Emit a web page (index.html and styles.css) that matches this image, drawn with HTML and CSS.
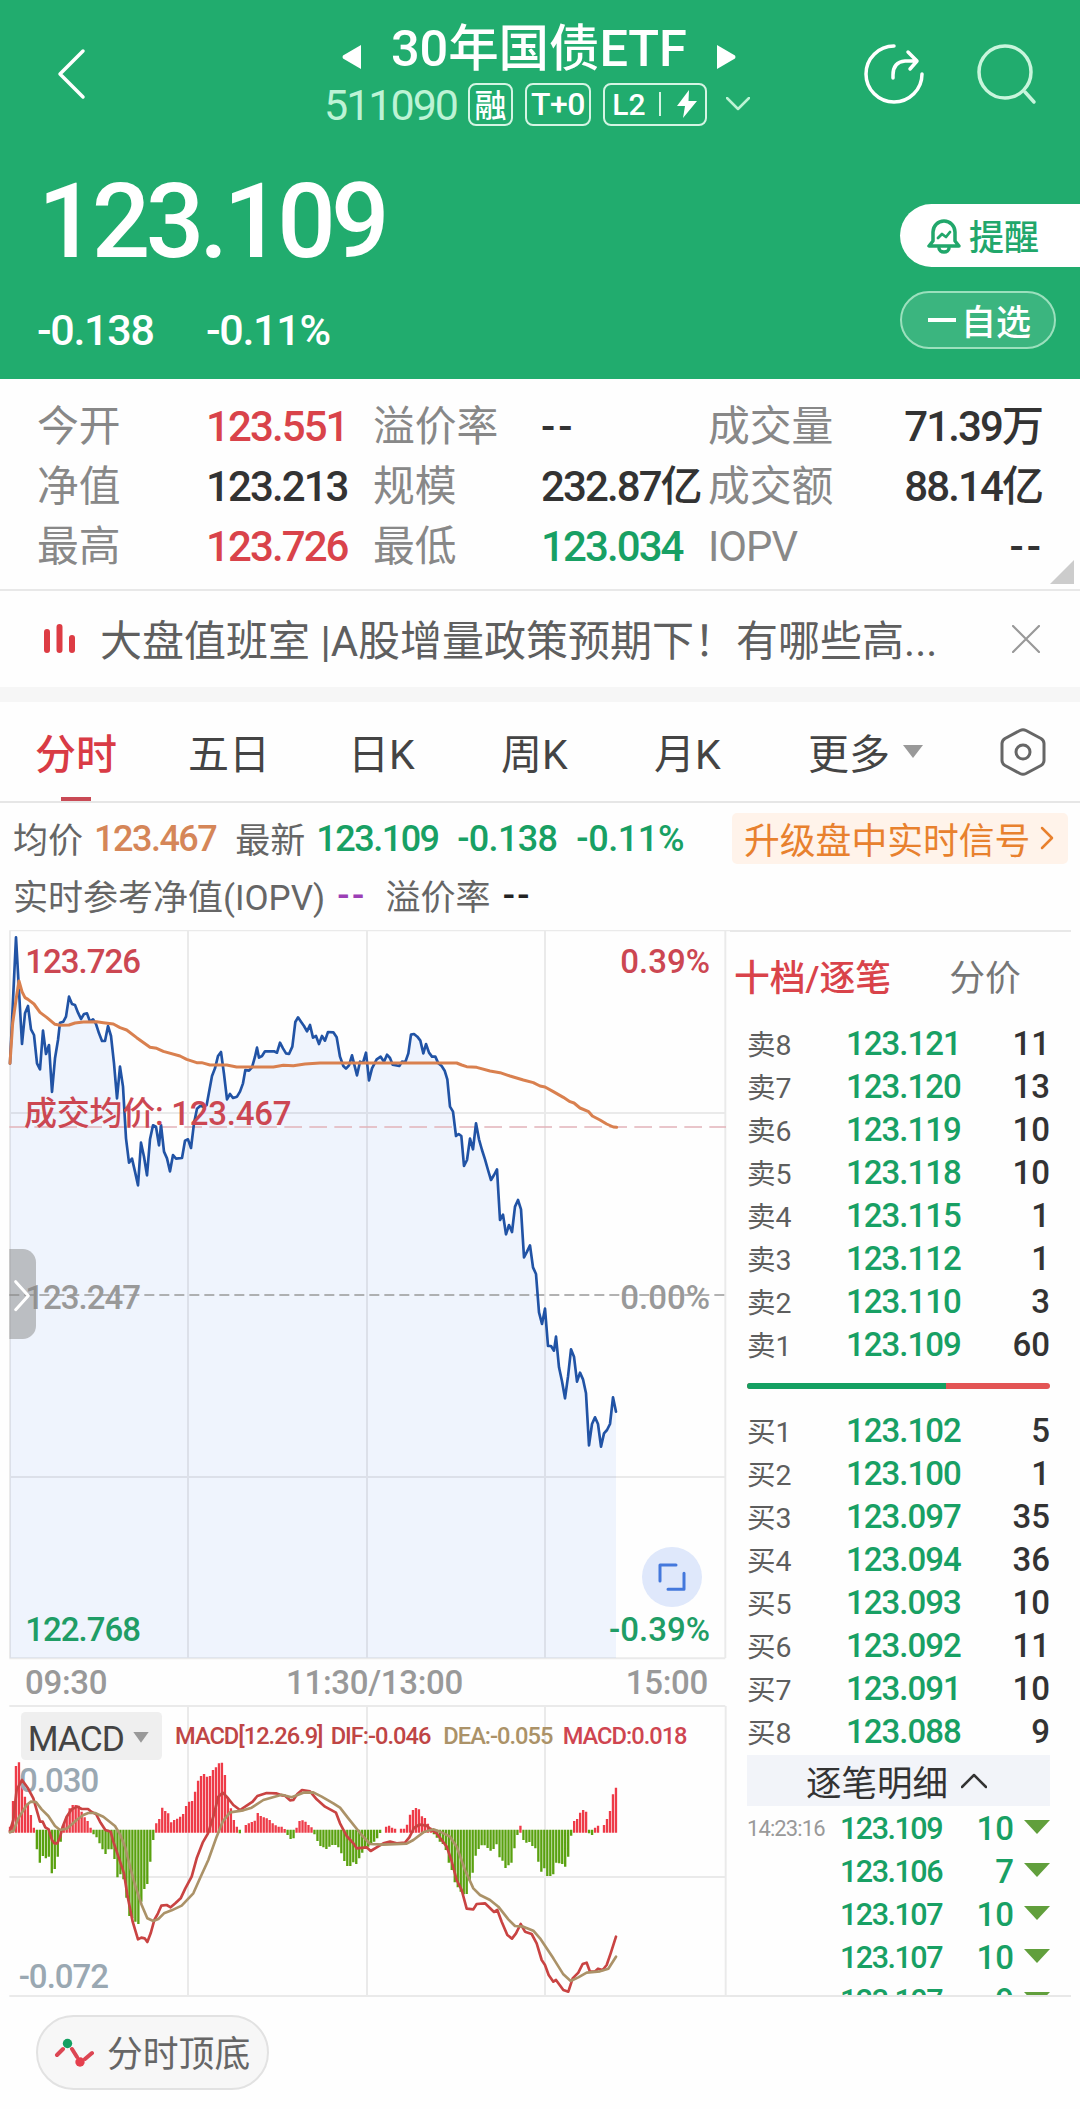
FILE: index.html
```html
<!DOCTYPE html>
<html lang="zh-CN">
<head>
  <meta charset="UTF-8">
  <meta name="viewport" content="width=device-width, initial-scale=1.0">
  <title>30年国债ETF 511090</title>
  <link rel="stylesheet" href="styles.css">
</head>
<body>

<header class="header">
  <div class="topbar">
    <svg class="back" width="32" height="52" viewBox="0 0 32 52"><path d="M28 3L5 26l23 23"/></svg>
    <div class="heading">
      <div class="title-row">
        <svg width="20" height="28" viewBox="0 0 20 28"><path d="M19 2v24L1 15.500q-1-1.500 0-3z"/></svg>
        <h1>30年国债ETF</h1>
        <svg width="20" height="28" viewBox="0 0 20 28"><path d="M1 2v24l18-10.500q1-1.500 0-3z"/></svg>
      </div>
      <div class="code-row">
        <span class="code">511090</span>
        <span class="tag tag-rong">融</span>
        <span class="tag tag-t0">T+0</span>
        <span class="tag tag-l2">L2<i></i><svg width="22" height="30" viewBox="0 0 22 30"><path d="M13 1L1 17h8L7 29l14-17h-8.500z"/></svg></span>
        <svg class="down" width="24" height="14" viewBox="0 0 24 14"><path d="M1 1l11 11L23 1"/></svg>
      </div>
    </div>
    <div class="tools">
      <svg width="62" height="62" viewBox="0 0 62 62"><path d="M31 3a28 28 0 1 0 28 28"/><path d="M30 35v-3q0-13 12-14h11M45 9l9 9-7 8"/></svg>
      <svg class="search" width="64" height="64" viewBox="0 0 64 64"><circle cx="30" cy="30" r="26"/><path d="M50 50l9 10"/></svg>
    </div>
  </div>
  <div class="quote">
    <div>
      <div class="price">123.109</div>
      <div class="change"><span>-0.138</span><span>-0.11%</span></div>
    </div>
    <div class="actions">
      <button class="remind">
        <svg width="34" height="36" viewBox="0 0 34 36"><path d="M2 28h30l-4-5V14a11 11 0 0 0-22 0v9z"/><path d="M12 30a5 4 0 0 0 10 0"/><path class="thin" d="M11 20l4-4 4 3 4-5"/></svg>
        提醒
      </button>
      <button class="watch"><i></i>自选</button>
    </div>
  </div>
</header>

<section class="stats">
  <span>今开</span><b class="red">123.551</b><span>溢价率</span><b class="none">--</b><span>成交量</span><b class="end">71.39万</b>
  <span>净值</span><b>123.213</b><span>规模</span><b>232.87亿</b><span>成交额</span><b class="end">88.14亿</b>
  <span>最高</span><b class="red">123.726</b><span>最低</span><b class="green">123.034</b><span class="iopv">IOPV</span><b class="end none">--</b>
  <div class="corner"></div>
</section>

<section class="news">
  <svg width="32" height="32" viewBox="0 0 32 32"><path d="M3 9v18M15.500 4v23M28 15v12"/></svg>
  <p>大盘值班室 |A股增量政策预期下！有哪些高...</p>
  <svg class="close" width="28" height="28" viewBox="0 0 28 28"><path d="M1 1l26 26M27 1L1 27"/></svg>
</section>

<nav class="tabs">
  <a class="active">分时</a><a>五日</a><a>日K</a><a>周K</a><a>月K</a><a>更多<i class="caret"></i></a>
  <svg width="46" height="50" viewBox="0 0 46 50"><path d="M20 3.500q3-1.500 6 0l15 8q3 2 3 5v17q0 3-3 5l-15 8q-3 1.500-6 0l-15-8q-3-2-3-5v-17q0-3 3-5z"/><circle cx="23" cy="25" r="7"/></svg>
</nav>

<section class="summary">
  <div class="line">
    <span class="lab">均价</span><b class="orange">123.467</b>
    <span class="lab">最新</span><b class="green last">123.109</b><b class="green diff">-0.138</b><b class="green pct">-0.11%</b>
    <a class="promo">升级盘中实时信号<svg width="14" height="24" viewBox="0 0 14 24"><path d="M2 2l10 10L2 22"/></svg></a>
  </div>
  <div class="line second">
    <span class="lab">实时参考净值(IOPV)</span><b class="purple">--</b>
    <span class="lab">溢价率</span><b class="black">--</b>
  </div>
</section>

<main class="board">
  <div class="charts">
    <svg class="chart-price" width="730" height="730" viewBox="0 30 2190 2190">
      <polygon class="area" id="area"/>
      <path class="grid" d="M28 31H2190M30 32V2214M564 32V2214M1101 32V2214M1635 32V2214M2176 32V2214M30 579H2176M30 1671H2176M28 2215H2176"/>
      <path class="avg-dash" d="M28 621H2178"/>
      <path class="mid-dash" d="M28 1125H2176"/>
      <polyline class="price-line" id="price" points="30,430 48,52 66,372 75,280 84,258 93,328 102,345 111,430 120,448 129,332 138,402 147,375 156,516 165,415 174,360 180,308 190,305 198,290 207,230 216,252 225,255 234,278 243,297 252,282 261,280 270,305 279,298 288,312 297,340 306,363 315,363 324,318 333,348 342,430 351,535 360,440 369,500 378,655 387,728 396,716 405,755 414,796 423,668 432,710 441,766 450,658 459,616 468,620 477,676 483,615 492,695 501,715 510,754 519,705 528,716 546,714 555,662 564,658 573,684 582,610 591,566 600,558 612,560 620,555 636,468 645,445 654,408 663,396 672,462 681,538 690,522 699,534 711,530 720,515 729,490 736,450 747,452 756,442 765,410 771,383 777,413 786,408 795,394 822,394 831,398 840,368 849,385 858,400 867,402 877,380 886,306 894,292 903,305 912,318 921,334 930,315 939,353 948,348 957,372 966,348 975,362 984,336 1000,337 1010,352 1020,410 1030,438 1038,446 1047,436 1056,406 1071,466 1080,425 1089,428 1098,398 1107,481 1116,445 1130,418 1142,410 1152,425 1161,404 1170,414 1178,434 1198,438 1206,425 1216,426 1225,400 1233,344 1242,342 1252,350 1261,362 1270,400 1278,372 1287,398 1296,410 1306,410 1315,430 1325,438 1334,452 1342,478 1350,560 1359,575 1368,648 1376,642 1384,648 1392,738 1401,720 1410,656 1419,688 1428,610 1437,658 1446,690 1455,718 1464,750 1473,780 1482,765 1491,748 1500,900 1509,884 1518,943 1527,915 1536,936 1545,860 1554,840 1563,868 1572,1012 1581,995 1590,976 1599,1042 1608,1062 1617,1177 1626,1212 1635,1166 1644,1278 1653,1278 1662,1292 1668,1250 1677,1342 1686,1384 1695,1435 1704,1370 1713,1288 1722,1310 1731,1385 1740,1358 1749,1378 1758,1420 1767,1576 1776,1512 1785,1492 1794,1512 1803,1580 1812,1540 1821,1530 1830,1512 1839,1432 1848,1475"/>
      <polyline class="avg-line" points="30,430 38,310 48,240 57,183 66,215 75,233 84,238 102,252 120,277 140,292 165,313 180,316 207,315 225,309 250,306 290,305 310,308 340,312 360,323 380,330 410,353 450,382 470,385 490,394 540,408 560,418 590,428 605,428 630,435 680,435 710,441 820,441 850,436 880,437 915,432 960,429 1370,429 1385,435 1400,440 1430,442 1470,453 1500,458 1530,468 1570,480 1600,488 1620,498 1635,501 1660,515 1690,532 1710,545 1722,549 1740,564 1766,575 1777,588 1800,600 1820,612 1840,621 1850,622"/>
      <text class="red" x="76" y="159">123.726</text>
      <text class="red end" x="2130" y="159">0.39%</text>
      <text class="red avg-label" x="72" y="615">成交均价: 123.467</text>
      <text class="gray" x="76" y="1167">123.247</text>
      <text class="gray end" x="2130" y="1167">0.00%</text>
      <text class="green" x="76" y="2163">122.768</text>
      <text class="green end" x="2130" y="2163">-0.39%</text>
      <path class="drawer" d="M28 987h40a40 40 0 0 1 40 40v190a40 40 0 0 1-40 40h-40z"/>
      <path class="drawer-arrow" d="M47 1085l38 42-38 42"/>
      <circle class="full-bg" cx="2016" cy="1971" r="90"/>
      <path class="full-icon" d="M1980 1983v-48h48M2052 1960v48h-48"/>
    </svg>
    <div class="times"><span>09:30</span><span class="noon">11:30/13:00</span><span>15:00</span></div>
    <svg class="chart-macd" width="730" height="292" viewBox="0 195 2190 876">
      <path class="grid" d="M28 198H2176M564 198V1068M1101 198V1068M1635 198V1068M2177 198V1068M28 711H2176M28 1068H2190"/>
      <path class="bars-up" id="up"/>
      <path class="bars-down" id="down"/>
      <text class="level" x="57" y="457">0.030</text>
      <text class="level" x="56" y="1043">-0.072</text>
      <polyline class="dif" points="30,573 40,540 50,450 66,420 84,445 100,475 120,545 128,545 136,562 146,568 156,600 163,610 172,610 180,592 188,560 200,530 215,508 232,500 245,507 264,507 275,516 288,522 300,545 316,570 332,575 340,605 352,640 372,700 382,765 398,845 414,898 424,893 434,895 442,906 452,880 463,840 474,820 484,797 500,795 512,802 526,790 542,775 556,745 575,710 590,655 608,608 624,580 640,530 655,470 668,458 680,470 700,495 720,510 740,497 758,485 772,468 800,459 828,460 845,466 855,467 870,481 880,480 892,462 906,450 930,454 950,478 975,500 1008,518 1020,550 1040,588 1060,610 1070,625 1100,622 1112,633 1130,622 1150,610 1170,605 1190,610 1215,608 1228,592 1242,564 1258,554 1280,557 1292,568 1310,580 1325,600 1340,620 1354,660 1370,720 1385,750 1400,806 1420,808 1430,792 1455,790 1482,816 1492,810 1505,845 1522,885 1536,896 1548,880 1562,852 1575,875 1595,882 1610,910 1625,960 1635,975 1646,1005 1660,1025 1668,1020 1690,1050 1705,1055 1718,1015 1735,998 1748,972 1760,968 1770,995 1784,995 1794,986 1808,990 1820,975 1832,940 1848,890"/>
      <polyline class="dea" points="30,577 40,573 55,535 80,495 92,485 108,486 125,508 145,528 165,558 180,570 200,566 230,540 250,525 265,519 285,519 310,530 345,558 360,583 375,620 390,680 405,735 425,795 442,835 460,843 475,837 492,820 515,811 545,797 580,760 600,715 625,660 650,590 668,545 690,517 730,511 755,503 790,480 845,464 875,472 910,458 940,457 965,470 1000,490 1020,503 1045,535 1085,585 1110,612 1150,614 1220,611 1240,600 1270,577 1300,568 1320,575 1350,590 1370,620 1395,690 1420,745 1440,765 1470,780 1495,800 1525,838 1545,858 1570,860 1600,872 1620,895 1660,955 1690,1003 1712,1023 1735,1012 1760,998 1800,994 1825,986 1848,950"/>
      <rect class="chip" x="63" y="216" width="423" height="144" rx="14"/>
      <text class="chip-text" x="83" y="332">MACD</text>
      <path class="chip-caret" d="M400 276h46l-23 32z"/>
      <text class="legend dif-text" x="525" y="311">MACD[12.26.9]</text>
      <text class="legend dif-text" x="992" y="311">DIF:-0.046</text>
      <text class="legend dea-text" x="1330" y="311">DEA:-0.055</text>
      <text class="legend macd-text" x="1688" y="311">MACD:0.018</text>
    </svg>
  </div>

  <aside class="book">
    <div class="book-tabs"><span class="on">十档/逐笔</span><span>分价</span></div>
    <ul class="orders">
      <li><span>卖8</span><b>123.121</b><em>11</em></li>
      <li><span>卖7</span><b>123.120</b><em>13</em></li>
      <li><span>卖6</span><b>123.119</b><em>10</em></li>
      <li><span>卖5</span><b>123.118</b><em>10</em></li>
      <li><span>卖4</span><b>123.115</b><em>1</em></li>
      <li><span>卖3</span><b>123.112</b><em>1</em></li>
      <li><span>卖2</span><b>123.110</b><em>3</em></li>
      <li><span>卖1</span><b>123.109</b><em>60</em></li>
    </ul>
    <div class="ratio"><i style="width: 65.7%"></i></div>
    <ul class="orders">
      <li><span>买1</span><b>123.102</b><em>5</em></li>
      <li><span>买2</span><b>123.100</b><em>1</em></li>
      <li><span>买3</span><b>123.097</b><em>35</em></li>
      <li><span>买4</span><b>123.094</b><em>36</em></li>
      <li><span>买5</span><b>123.093</b><em>10</em></li>
      <li><span>买6</span><b>123.092</b><em>11</em></li>
      <li><span>买7</span><b>123.091</b><em>10</em></li>
      <li><span>买8</span><b>123.088</b><em>9</em></li>
    </ul>
    <div class="detail-head">逐笔明细<svg width="26" height="16" viewBox="0 0 26 16"><path d="M1 14L13 2l12 12"/></svg></div>
    <ul class="ticks">
      <li><span>14:23:16</span><b>123.109</b><em>10</em><i></i></li>
      <li><span></span><b>123.106</b><em>7</em><i></i></li>
      <li><span></span><b>123.107</b><em>10</em><i></i></li>
      <li><span></span><b>123.107</b><em>10</em><i></i></li>
      <li><span></span><b>123.107</b><em>9</em><i></i></li>
    </ul>
  </aside>
</main>

<footer class="footer">
  <button class="pill">
    <svg width="40" height="32" viewBox="0 0 40 32"><path d="M3 18l6-6M18 12l5 8M31 22l7-6"/><circle class="top" cx="13.500" cy="6.500" r="4.700"/><circle class="bottom" cx="26" cy="25" r="4.700"/></svg>
    <span>分时顶底</span>
  </button>
</footer>

<script>
  // Fill under the price line
  const price = document.getElementById('price').getAttribute('points');
  document.getElementById('area').setAttribute('points', price + ' 1848,2214 30,2214');

  // MACD histogram, one level per minute
  const levels = [
    560, 483, 378, 367, 430, 470, 490, 525, 563, 628, 668, 648, 655, 650, 700, 687, 650, 605, 555, 530,
    505, 495, 495, 497, 515, 532, 543, 563, 583, 592, 610, 628, 642, 628, 628, 657, 712, 703, 718, 773,
    828, 835, 845, 852, 785, 747, 732, 665, 600, 550, 537, 503, 513, 520, 547, 540, 536, 530, 522, 498,
    485, 483, 455, 422, 408, 402, 410, 408, 390, 382, 370, 368, 405, 472, 505, 540, 560, 580, 573, 555,
    550, 546, 542, 519, 528, 532, 535, 540, 550, 556, 560, 560, 567, 585, 597, 595, 563, 543, 541, 545,
    555, 562, 583, 603, 618, 622, 627, 620, 615, 615, 622, 640, 663, 678, 678, 667, 672, 655, 638, 625,
    620, 610, 605, 595, 579, 573, 560, 557, 563, 566, 573, 566, 566, 554, 524, 510, 504, 508, 529, 534,
    551, 563, 583, 593, 605, 612, 630, 668, 690, 727, 742, 755, 763, 762, 722, 698, 647, 627, 616, 616,
    624, 632, 627, 613, 652, 662, 684, 676, 668, 625, 585, 557, 600, 608, 606, 618, 625, 665, 695, 685,
    708, 708, 703, 668, 670, 672, 680, 650, 587, 543, 537, 518, 510, 515, 580, 585, 563, 557, 573, 555,
    537, 513, 463, 443
  ];
  const zero = 573;
  let up = '';
  let down = '';
  levels.forEach((y, i) => {
    const x = (30 + i * 8.955).toFixed(1);
    if (y < zero) up += `M${x} 578V${y}`;
    if (y > zero) down += `M${x} 569V${y}`;
  });
  document.getElementById('up').setAttribute('d', up);
  document.getElementById('down').setAttribute('d', down);
</script>

</body>
</html>
```
FILE: styles.css
```css
* {
  box-sizing: border-box;
}

body {
  margin: 0;
  width: 1080px;
  height: 2109px;
  overflow: hidden;
  background: #fefefe;
  color: #333;
  font-family: Roboto, "Noto Sans CJK SC", sans-serif;
}

h1, p, ul {
  margin: 0;
  padding: 0;
}

ul {
  list-style: none;
}

b, em, h1 {
  font-weight: 500;
  font-style: normal;
}

svg {
  display: block;
  flex: none;
  fill: none;
  stroke-linecap: round;
  stroke-linejoin: round;
}

button {
  font: inherit;
  border: 0;
  padding: 0;
  display: flex;
  align-items: center;
}

.red { color: #d9434a; fill: #cc4752; }
.green { color: #18a064; fill: #1f9d66; }
.gray { fill: #999; }
.orange { color: #d58658; }
.purple { color: #9b3fb5; }
.black { color: #222; }

/* Header */
.header {
  height: 379px;
  background: #21ac6e;
  color: #fff;
}

.topbar {
  height: 146px;
  display: grid;
  grid-template-columns: 324px 432px 1fr;
}

.back {
  margin: 48px 0 0 55px;
  stroke: #fff;
  stroke-width: 3.5;
}

.title-row {
  display: flex;
  align-items: center;
  height: 66px;
  margin-top: 15px;
  padding-left: 18px;
}

.title-row svg {
  fill: #fff;
  margin-top: 18px;
}

.title-row h1 {
  font-size: 50.500px;
  line-height: 66px;
  letter-spacing: -0.1px;
  width: 297px;
  margin: 2px 28px 0 29px;
  white-space: nowrap;
}

.code-row {
  display: flex;
  align-items: center;
  height: 44px;
  margin-top: 1px;
}

.code {
  width: 144px;
  font-size: 43px;
  letter-spacing: -2px;
  line-height: 48px;
  padding-top: 2px;
  color: #bdf3d5;
}

.tag {
  display: flex;
  align-items: center;
  justify-content: center;
  height: 43px;
  margin-right: 12px;
  border: 2px solid #d5f5e4;
  border-radius: 8px;
  font-size: 32px;
  font-weight: 500;
  white-space: nowrap;
}

.tag-rong { width: 45px; padding-bottom: 2px; }
.tag-t0 { width: 66px; letter-spacing: -0.5px; }
.tag-l2 { width: 104px; font-size: 30px; margin-right: 19px; }

.tag-l2 i {
  width: 2px;
  height: 24px;
  margin: 0 15px 0 13px;
  background: #d5f5e4;
}

.tag-l2 svg { fill: #fff; }

.down {
  stroke: #bdf3d5;
  stroke-width: 2.5;
}

.tools {
  display: flex;
  padding: 43px 0 0 107px;
  gap: 50px;
}

.tools svg {
  stroke: #fff;
  stroke-width: 3.5;
}

.tools .search { stroke: #c8f5dc; margin-top: -1px; }

.quote {
  display: flex;
  justify-content: space-between;
}

.price {
  height: 145px;
  padding-left: 38px;
  font-size: 103px;
  font-weight: 500;
  line-height: 152px;
  letter-spacing: -4.7px;
}

.change {
  display: grid;
  grid-template-columns: 169px 1fr;
  padding-left: 37px;
  font-size: 43px;
  font-weight: 500;
  line-height: 79px;
  letter-spacing: -1.3px;
}

.actions {
  width: 180px;
  padding-top: 58px;
}

.remind {
  width: 180px;
  height: 63px;
  padding: 0 0 2px 27px;
  gap: 8px;
  border-radius: 32px 0 0 32px;
  background: #fff;
  color: #21a76b;
  font-size: 35px;
  font-weight: 500;
}

.remind svg {
  margin-top: 2px;
  stroke: #21a76b;
  stroke-width: 3.5;
}

.remind .thin { stroke-width: 2.8; }

.watch {
  width: 156px;
  height: 58px;
  margin-top: 24px;
  padding: 0 0 2px 26px;
  border: 2px solid #9be0bd;
  border-radius: 29px;
  background: #3bb57f;
  color: #fff;
  font-size: 35px;
  font-weight: 500;
}

.watch i {
  width: 28px;
  height: 4px;
  margin: 2px 5px 0 0;
  background: #fff;
}

/* Key figures */
.stats {
  position: relative;
  display: grid;
  grid-template-columns: 169px 167px 168px 167px 140px 194px;
  grid-auto-rows: 60px;
  align-items: center;
  height: 212px;
  padding: 18px 0 0 37px;
  border-bottom: 2px solid #e8e8e8;
  font-size: 41.800px;
  line-height: 60px;
  white-space: nowrap;
}

.stats span { color: #888; }
.stats .iopv { letter-spacing: -1px; }

.stats b {
  font-size: 42px;
  letter-spacing: -1.9px;
}

.stats .none { letter-spacing: 3px; }
.stats .end { text-align: right; }
.stats .end.none { margin-right: -2px; }

.corner {
  position: absolute;
  right: 6px;
  bottom: 5px;
  border-bottom: 24px solid #ccc;
  border-left: 24px solid transparent;
}

.news {
  display: flex;
  align-items: center;
  height: 96px;
  padding: 0 40px 0 44px;
  font-size: 42px;
  color: #5f5f5f;
}

.news svg {
  stroke: #dd3c44;
  stroke-width: 6;
}

.news p {
  flex: 1;
  padding: 0 0 0 24px;
  line-height: 60px;
  margin-top: 6px;
  white-space: nowrap;
}

.news .close {
  stroke: #999;
  stroke-width: 2.2;
}

/* Period tabs */
.tabs {
  display: grid;
  grid-template-columns: 153px 160px 153px 153px 154px 192px 46px;
  align-items: center;
  height: 116px;
  padding-left: 35px;
  border-top: 15px solid #f6f6f6;
  border-bottom: 2px solid #e6e6e6;
  font-size: 41px;
  color: #444;
}

.tabs a {
  display: flex;
  align-items: center;
  height: 99px;
  padding-bottom: 1px;
}

.tabs .active {
  color: #d93b45;
  font-weight: 500;
  background: linear-gradient(#c94a55, #c94a55) 26px 95px / 30px 4px no-repeat;
}

.tabs svg {
  stroke: #666;
  stroke-width: 3;
}

.caret {
  margin-left: 13px;
  border: 10px solid transparent;
  border-top: 13px solid #999;
  border-bottom: 0;
}

/* Average / latest price */
.summary {
  height: 127px;
  padding: 8px 12px 0 13px;
  font-size: 35px;
  color: #666;
}

.line {
  display: flex;
  align-items: center;
  height: 55px;
  white-space: nowrap;
}

.summary b {
  margin: 0 19px 0 11px;
  font-size: 36px;
  letter-spacing: -1.5px;
}

.lab { margin-top: -2px; }

.summary .last { width: 122px; margin: 0 19px 0 11px; }
.summary .diff { width: 119px; margin: 0; letter-spacing: -0.7px; }
.summary .pct { margin: 0; letter-spacing: -0.4px; }
.second { margin-top: 2px; }
.summary .second b { margin: 0 19px 0 12px; letter-spacing: 2.5px; }

.promo {
  display: flex;
  align-items: center;
  justify-content: space-between;
  width: 336px;
  height: 51px;
  margin-left: auto;
  padding: 0 14px 2px 12px;
  border-radius: 5px;
  background: #fff3ea;
  color: #e8812e;
  font-size: 35.800px;
}

.promo svg {
  stroke: #e8812e;
  stroke-width: 2.5;
}

/* Chart area */
.board {
  display: flex;
  height: 1067px;
}

.charts { width: 730px; }

.grid {
  stroke: #000;
  stroke-opacity: 0.08;
  stroke-width: 6;
  stroke-linecap: butt;
}

.area { fill: #eff4fd; }

.price-line, .avg-line, .dif, .dea { stroke-width: 8; }
.price-line { stroke: #2153a5; }
.avg-line { stroke: #d9804f; stroke-width: 9; }

.avg-dash {
  stroke: #e2b3b9;
  stroke-width: 5;
  stroke-dasharray: 53 22;
  stroke-linecap: butt;
}

.mid-dash {
  stroke: #999;
  stroke-width: 5;
  stroke-dasharray: 30 15;
  stroke-linecap: butt;
}

.chart-price text, .level {
  font-size: 99px;
  font-weight: 500;
  letter-spacing: -3px;
}

.chart-price .end { letter-spacing: 0; }
.chart-price .avg-label { letter-spacing: -0.8px; }

.end { text-anchor: end; }

.drawer { fill: #888; fill-opacity: 0.5; }
.drawer-arrow { stroke: #fff; stroke-width: 9; }
.full-bg { fill: #dfe8fb; }
.full-icon { stroke: #4478dc; stroke-width: 9; }

.times {
  display: flex;
  justify-content: space-between;
  height: 45px;
  padding: 0 22px 0 25px;
  font-size: 33px;
  font-weight: 500;
  line-height: 46px;
  letter-spacing: -0.3px;
  color: #999;
}

.noon { padding-left: 16px; }

.bars-up, .bars-down {
  stroke-width: 7;
  stroke-linecap: butt;
}

.bars-up { stroke: #ee3b48; }
.bars-down { stroke: #59a10f; }
.dif { stroke: #c94342; }
.dea { stroke: #ab9268; }
.level { fill: #9aa8b2; }
.chip { fill: #efefef; }
.chip-text { font-size: 106px; letter-spacing: -3px; fill: #444; }
.chip-caret { fill: #999; }

.legend {
  font-size: 71px;
  font-weight: 500;
  letter-spacing: -3px;
}

.dif-text { fill: #bf4545; }
.dea-text { fill: #ab9268; }
.macd-text { fill: #cf4550; }

/* Order book */
.book {
  width: 341px;
  border-top: 2px solid #e8e8e8;
  border-bottom: 2px solid #e8e8e8;
  padding: 0 21px 0 17px;
  overflow: hidden;
}

.book-tabs {
  display: flex;
  gap: 58px;
  height: 90px;
  margin-left: -13px;
  font-size: 35.800px;
  line-height: 94px;
  color: #777;
  white-space: nowrap;
}

.book-tabs .on { color: #d9434a; font-weight: 500; }

.orders li, .ticks li {
  display: grid;
  align-items: center;
  height: 43px;
}

.orders li {
  grid-template-columns: 99px 130px 1fr;
  font-size: 33px;
}

.orders span {
  margin-top: -2px;
  font-size: 28.500px;
  color: #5e5e5e;
}

.orders b, .ticks b, .ticks em { color: #18a064; }
.orders b { letter-spacing: -1px; }
.orders em, .ticks em { text-align: right; }

.ratio {
  height: 6px;
  margin: 17px 0 20px;
  border-radius: 3px;
  overflow: hidden;
  background: #e35454;
}

.ratio i {
  display: block;
  height: 6px;
  background: #14a062;
}

.detail-head {
  display: flex;
  align-items: center;
  justify-content: center;
  gap: 13px;
  height: 51px;
  margin-top: 2px;
  padding-right: 4px;
  background: #f2f4f9;
  font-size: 35.500px;
}

.detail-head svg {
  stroke: #333;
  stroke-width: 2.5;
}

.ticks { padding-top: 1px; }

.ticks li {
  grid-template-columns: 93px 110px 64px 1fr;
  font-size: 33px;
}

.ticks span {
  font-size: 22px;
  letter-spacing: -0.9px;
  color: #999;
}

.ticks b {
  font-size: 30.500px;
  letter-spacing: -1.5px;
}

.ticks i {
  justify-self: end;
  margin-top: -3px;
  border: 13px solid transparent;
  border-top: 14px solid #619f3c;
  border-bottom: 0;
}

.footer { padding: 18px 36px; }

.pill {
  width: 233px;
  height: 75px;
  padding-left: 16px;
  gap: 13px;
  border: 2px solid #e2e2e2;
  border-radius: 38px;
  background: #f7f7f7;
  color: #666;
  font-size: 35.800px;
  white-space: nowrap;
}

.pill span { margin-top: -4px; }

.pill svg {
  stroke: #dc4653;
  stroke-width: 4;
}

.pill circle { stroke: none; }
.pill .top { fill: #14a062; }
.pill .bottom { fill: #e5404e; }
```
